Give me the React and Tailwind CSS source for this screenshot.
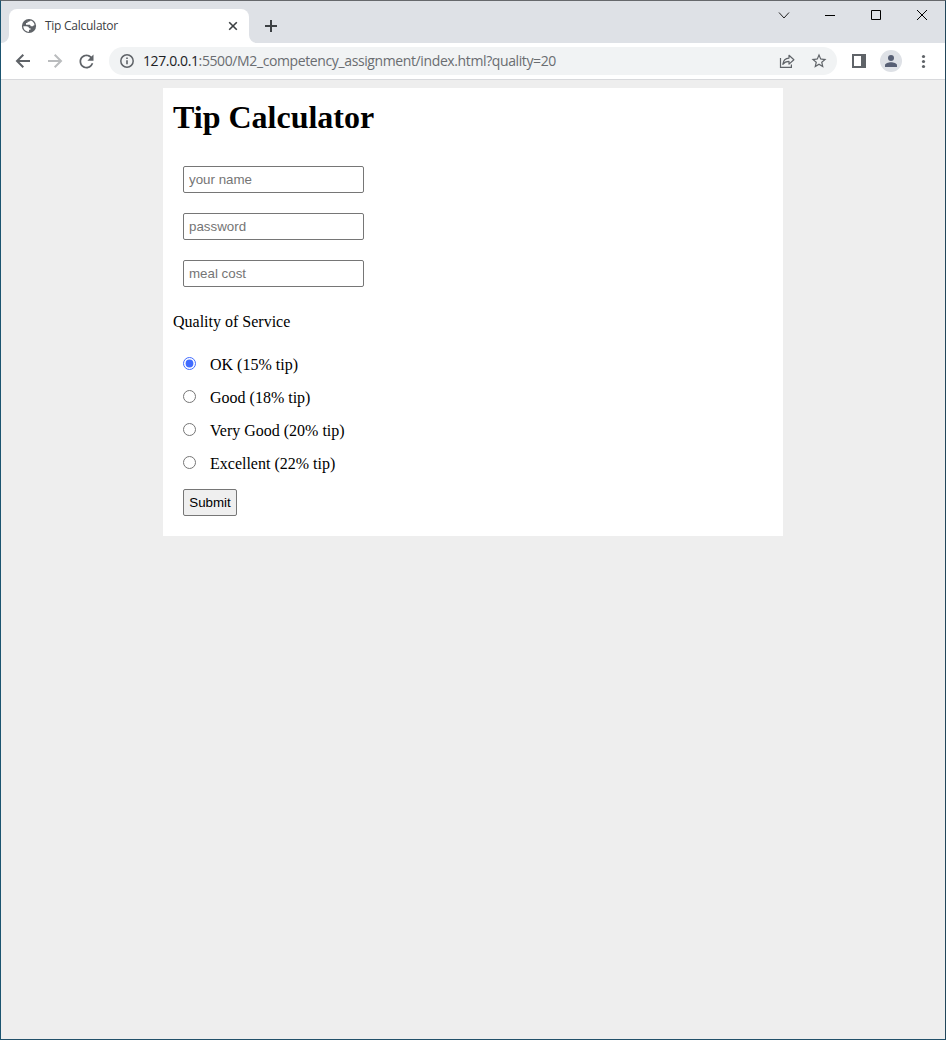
import React from "react";

const fields = [
  { type: "text", placeholder: "your name" },
  { type: "password", placeholder: "password" },
  { type: "text", placeholder: "meal cost" },
];

const options = [
  { value: 15, label: "OK (15% tip)" },
  { value: 18, label: "Good (18% tip)" },
  { value: 20, label: "Very Good (20% tip)" },
  { value: 22, label: "Excellent (22% tip)" },
];

function Icon({ d, className }) {
  return (
    <svg viewBox="0 0 24 24" fill="currentColor" className={className}>
      <path d={d} />
    </svg>
  );
}

function WindowControls() {
  return (
    <div className="ml-auto flex h-[28px]">
      <svg className="h-[28px] w-[46px]" viewBox="0 0 46 28" fill="none" stroke="#202020">
        <path d="M18 11.500l5 5.500 5-5.500" />
      </svg>
      <svg className="h-[28px] w-[46px]" viewBox="0 0 46 28" fill="none" stroke="#000">
        <path d="M18 14.500h10" />
      </svg>
      <svg className="h-[28px] w-[46px]" viewBox="0 0 46 28" fill="none" stroke="#000">
        <path d="M18.500 9.500h9v9h-9z" />
      </svg>
      <svg className="h-[28px] w-[46px]" viewBox="0 0 46 28" fill="none" stroke="#000">
        <path d="M18 9l10 10M28 9l-10 10" />
      </svg>
    </div>
  );
}

function TabStrip() {
  return (
    <div className="flex h-[42px] bg-[#dee1e6]">
      <svg className="mt-[34px] h-2 w-2 shrink-0" viewBox="0 0 8 8">
        <path d="M0 8h8V0a8 8 0 0 1-8 8z" fill="#fff" />
      </svg>
      <div className="mt-2 flex h-[34px] w-[240px] shrink-0 items-center rounded-t-lg bg-white pr-[11px] pl-3">
        <svg className="h-4 w-4 shrink-0" viewBox="0 0 16 16">
          <circle cx="8" cy="8" r="7.100" fill="#5f6368" />
          <path
            d="M2.300 8.200h3c1.900 0 2.700.7 2.700 2h1.500v1.500H8v2c-3.200 0-5.600-2.300-5.700-5.500zM9.400 2.500c-.1.800-.6 1.200-1.500 1.200H6.500v1.400H5v1.600h3c1.200 0 1.700.5 1.700 1.600h1.600c.9 0 1.300-.4 1.300-1.100h1c-.2-2.300-1.800-4.200-4.200-4.700z"
            fill="#fff"
          />
        </svg>
        <span className="ml-2 font-['Open_Sans',sans-serif] text-[12px] leading-4 tracking-[-0.26px] text-[#3c4043]">
          Tip Calculator
        </span>
        <svg className="ml-auto h-[10px] w-[10px]" viewBox="0 0 10 10" fill="none" stroke="#3c4043" strokeWidth="1.600">
          <path d="M1.200 1.200l7.600 7.600M8.800 1.200l-7.600 7.600" />
        </svg>
      </div>
      <svg className="mt-[34px] h-2 w-2 shrink-0" viewBox="0 0 8 8">
        <path d="M8 8H0V0a8 8 0 0 0 8 8z" fill="#fff" />
      </svg>
      <svg className="mt-[19px] ml-2 h-3 w-3 shrink-0" viewBox="0 0 12 12" fill="none" stroke="#3c4043" strokeWidth="2">
        <path d="M6 0v12M0 6h12" />
      </svg>
      <WindowControls />
    </div>
  );
}

function Toolbar() {
  return (
    <div className="flex h-[37px] items-center border-b border-[#d8d9dc] bg-white pl-3 text-[#5f6368]">
      <svg className="h-5 w-5" viewBox="0 0 20 20" fill="none" stroke="#5f6368" strokeWidth="2">
        <path d="M17 10H4.500M10.300 3.700L4 10l6.300 6.300" />
      </svg>
      <svg className="ml-3 h-5 w-5" viewBox="0 0 20 20" fill="none" stroke="#babcbe" strokeWidth="2">
        <path d="M3 10h12.500M9.700 3.700L16 10l-6.300 6.300" />
      </svg>
      <Icon
        className="ml-[11px] h-[21px] w-[21px]"
        d="M17.650 6.350C16.200 4.900 14.210 4 12 4c-4.420 0-7.990 3.580-7.990 8s3.570 8 7.990 8c3.730 0 6.840-2.550 7.730-6h-2.080c-.82 2.330-3.040 4-5.650 4-3.310 0-6-2.690-6-6s2.690-6 6-6c1.660 0 3.140.69 4.220 1.780L13 11h7V4l-2.350 2.350z"
      />
      <div className="ml-3 flex h-7 w-[728px] items-center rounded-full bg-[#f1f3f4] pr-[9px] pl-[10px]">
        <svg className="h-4 w-4" viewBox="0 0 16 16" fill="none" stroke="#5f6368">
          <circle cx="8" cy="8" r="6.200" strokeWidth="1.500" />
          <path d="M8 7.200v4M8 4.600v1.500" strokeWidth="1.600" />
        </svg>
        <span className="ml-2 whitespace-nowrap font-['Open_Sans',sans-serif] text-[14px] leading-5 tracking-[-0.386px] text-[#6a6d71]">
          <span className="text-[#202124]">127.0.0.1</span>:5500/M2_competency_assignment/index.html?quality=20
        </span>
        <svg className="ml-auto h-4 w-4" viewBox="0 0 16 16" fill="none" stroke="#5f6368" strokeWidth="1.200">
          <path d="M1.500 5v9.400h10.900v-2.900" />
          <path d="M3.800 11.300c.5-3.900 2.500-6 6.200-6.200V2.300l4.900 4.400-4.900 4.400V8.300c-2.800 0-4.600.8-6.200 3z" strokeLinejoin="round" />
        </svg>
        <Icon
          className="ml-[15px] h-[18px] w-[18px]"
          d="M22 9.240l-7.190-.62L12 2 9.190 8.630 2 9.240l5.460 4.730L5.820 21 12 17.270 18.180 21l-1.630-7.030L22 9.240zM12 15.400l-3.760 2.270 1-4.280-3.320-2.880 4.380-.38L12 6.100l1.710 4.040 4.380.38-3.320 2.880 1 4.280L12 15.400z"
        />
      </div>
      <svg className="ml-[15px] h-[14px] w-[14px]" viewBox="0 0 14 14">
        <path d="M0 0h14v14H0zM2 2v10h7V2z" fill="#5f6368" fillRule="evenodd" />
      </svg>
      <div className="ml-[14px] flex h-[22px] w-[22px] items-center justify-center rounded-full bg-[#dee1e6]">
        <svg className="h-3 w-3" viewBox="0 0 12 12" fill="#575f74">
          <circle cx="6" cy="3" r="3" />
          <path d="M0 12v-1.800C0 8.200 3.500 7.200 6 7.200s6 1 6 3V12z" />
        </svg>
      </div>
      <svg className="ml-[13px] h-4 w-4" viewBox="0 0 16 16" fill="#5f6368">
        <circle cx="8.500" cy="3.500" r="1.600" />
        <circle cx="8.500" cy="8.500" r="1.600" />
        <circle cx="8.500" cy="13.500" r="1.600" />
      </svg>
    </div>
  );
}

function TipForm() {
  return (
    <form
      onSubmit={(event) => event.preventDefault()}
      className="mx-auto h-[448px] w-[620px] bg-white px-[10px] pt-[11px] font-['Liberation_Serif',serif] text-black"
    >
      <h1 className="text-[32px] leading-[37px] font-bold">Tip Calculator</h1>
      <div className="mt-[30px] ml-[10px] flex flex-col gap-5">
        {fields.map((field) => (
          <input
            key={field.placeholder}
            type={field.type}
            placeholder={field.placeholder}
            className="h-[27px] w-[181px] rounded-[2px] border border-[#767676] bg-white px-[5px] font-['Liberation_Sans',sans-serif] text-[13.333px] placeholder:text-[#757575]"
          />
        ))}
      </div>
      <p className="mt-[26px] text-[16px] leading-[18px]">Quality of Service</p>
      <div className="mt-[25px] ml-[10px] flex flex-col gap-[15px]">
        {options.map((option) => (
          <label key={option.value} className="flex h-[18px] items-start text-[16px] leading-[18px]">
            <input
              type="radio"
              name="quality"
              value={option.value}
              defaultChecked={option.value === 15}
              className="mt-px mr-[14px] h-[13px] w-[13px] accent-[#406bff]"
            />
            {option.label}
          </label>
        ))}
      </div>
      <button
        type="submit"
        className="mt-4 ml-[10px] block h-[27px] w-[54px] rounded-[2px] border border-[#767676] bg-[#efefef] font-['Liberation_Sans',sans-serif] text-[13.333px] leading-[15px]"
      >
        Submit
      </button>
    </form>
  );
}

export default function App() {
  return (
    <div className="flex h-[1040px] w-[946px] flex-col overflow-hidden border border-t-[#66686c] border-r-[#22465a] border-b-[#22506a] border-l-[#1b5470] bg-[#eeeeee]">
      <TabStrip />
      <Toolbar />
      <main className="flex-1 pt-2">
        <TipForm />
      </main>
    </div>
  );
}
